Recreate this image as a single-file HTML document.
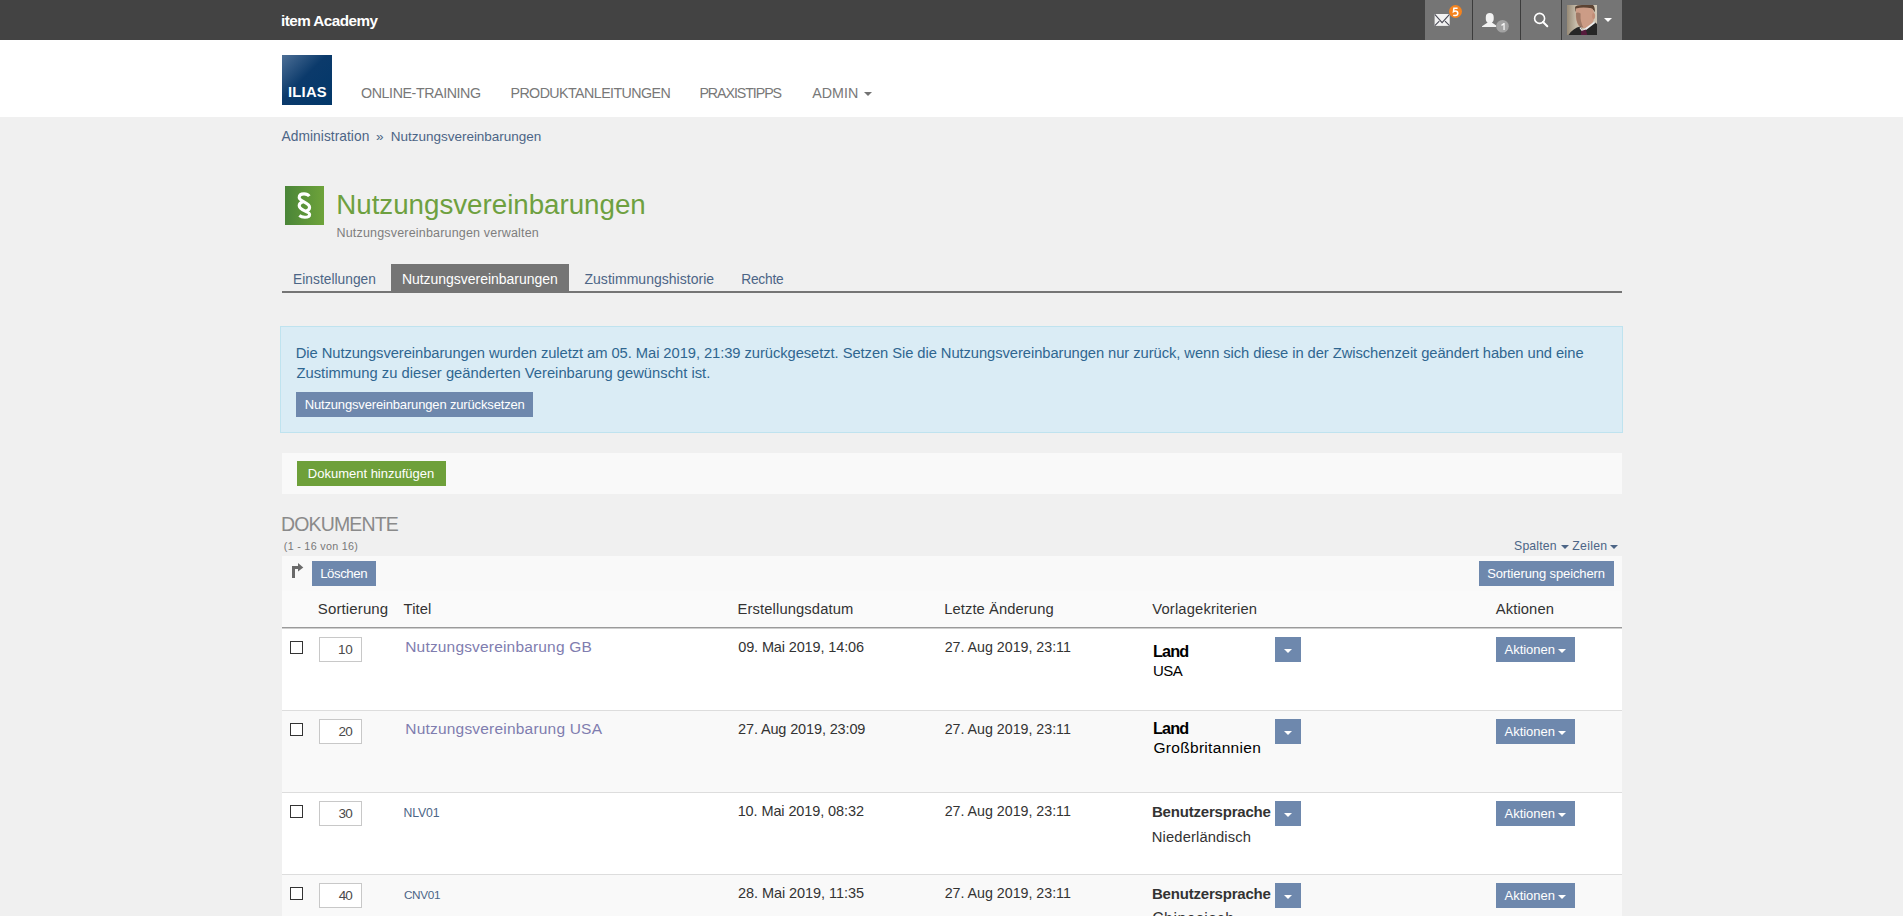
<!DOCTYPE html>
<html><head><meta charset="utf-8"><title>Nutzungsvereinbarungen</title>
<style>
html,body{margin:0;padding:0;}
body{width:1903px;height:916px;overflow:hidden;background:#f0f0f0;position:relative;font-family:"Liberation Sans",sans-serif;}
.b{position:absolute;}
.t{position:absolute;white-space:nowrap;font-family:"Liberation Sans",sans-serif;}
.btn{position:absolute;background:#6e88ad;}
.cb{position:absolute;width:11px;height:11px;border:1px solid #333;background:#fff;}
.inp{position:absolute;width:41px;height:23px;border:1px solid #c8c8c8;background:#fff;}
.caret{position:absolute;width:0;height:0;border-left:4px solid transparent;border-right:4px solid transparent;border-top:4px solid #fff;}
</style></head><body>
<!-- top bar -->
<div class="b" style="left:0;top:0;width:1903px;height:40px;background:#434343"></div>
<div class="b" style="left:1425px;top:0;width:197px;height:40px;background:#757575"></div>
<div class="b" style="left:1472px;top:0;width:1px;height:40px;background:#3c3c3c"></div>
<div class="b" style="left:1520px;top:0;width:1px;height:40px;background:#3c3c3c"></div>
<div class="b" style="left:1561px;top:0;width:1px;height:40px;background:#3c3c3c"></div>
<!-- mail icon -->
<svg class="b" style="left:1430px;top:2px" width="36" height="30" viewBox="0 0 36 30">
<rect x="4.6" y="12" width="15.1" height="11.9" fill="#f2f2f2"/>
<path d="M4.8 12.3 L12.1 20.6 L19.5 12.3" stroke="#4a4a55" stroke-width="1.1" fill="none"/>
<path d="M4.8 23.6 L9.3 19.2 M19.5 23.6 L15 19.2" stroke="#4a4a55" stroke-width="1.1" fill="none"/>
<circle cx="25.5" cy="9.5" r="6.5" fill="#f4831f"/>
<path d="M27.6 6.3 L23.9 6.3 L23.5 9.6 Q24.3 9 25.3 9 Q27.8 9 27.8 11.3 Q27.8 13.6 25.2 13.6 Q24 13.6 23.3 13.1" stroke="#fff" stroke-width="1.5" fill="none"/>
</svg>
<!-- person icon -->
<svg class="b" style="left:1476px;top:6px" width="36" height="30" viewBox="0 0 36 30">
<path d="M13.75 6.9 C16.2 6.9 17.7 8.3 17.7 11 L17.7 13.2 C17.7 14.8 16.8 15.8 16 16.3 L16.2 16.8 L20.2 19.5 L20.2 21 L6 21 L6 20.3 L11.3 16.8 L11.5 16.3 C10.7 15.8 9.8 14.8 9.8 13.2 L9.8 11 C9.8 8.3 11.3 6.9 13.75 6.9 Z" fill="#f2f2f2"/>
<circle cx="26.5" cy="20.3" r="6.3" fill="#a2a2a2"/>
<path d="M25.2 18.7 L27.6 17 L28.7 17 L28.7 24 L27.4 24 L27.4 19 L25.7 19.9 Z" fill="#f4f4f4"/>
</svg>
<!-- search -->
<svg class="b" style="left:1532px;top:11px" width="18" height="18" viewBox="0 0 18 18">
<circle cx="7.6" cy="7.4" r="5" stroke="#ffffff" stroke-width="1.6" fill="none"/>
<path d="M11 11 L15.3 15.3" stroke="#ffffff" stroke-width="2" stroke-linecap="round"/>
</svg>
<!-- avatar -->
<svg class="b" style="left:1567px;top:5px" width="30" height="30" viewBox="0 0 30 30">
<defs><linearGradient id="bgav" x1="0" y1="0" x2="1" y2="0"><stop offset="0" stop-color="#978a76"/><stop offset="0.3" stop-color="#c6bcaa"/><stop offset="1" stop-color="#d2c9b8"/></linearGradient></defs>
<rect width="30" height="30" fill="url(#bgav)"/>
<path d="M8 2 Q9 0 15 0 L26 0 Q28.3 2 27.8 7.5 Q26.5 3.5 22 3 Q14 2.5 10.5 4.2 Q8.8 5 8.6 7 Z" fill="#5b4333"/>
<path d="M9 3.5 Q17 1.5 25.5 3.8 L27.3 8 L27 14 Q25.5 20.5 20 22.8 Q14 24 11.5 20.5 Q8.5 16 8.8 9 Z" fill="#cc9c86"/>
<path d="M9 8 Q8.8 16 11.8 20.5 Q13.8 22.6 16.5 22.8 Q13 17 13.6 8.5 Q11 7 9 8 Z" fill="#94705e" opacity="0.8"/>
<ellipse cx="26.6" cy="11" rx="1.5" ry="3" fill="#c28e78"/>
<path d="M1.5 30 Q6 23 13.5 21.5 L15.5 26 L27.5 17 L30 19 L30 30 Z" fill="#262626"/>
<path d="M13.2 22 L15.5 25.3 L27.3 16.4 L28.2 18 L15.8 27.6 L12.5 23 Z" fill="#eeeeee"/>
<path d="M14.2 26 L18.8 24.5 L20.3 30 L14 30 Z" fill="#561a3c"/>
</svg>
<div class="caret" style="left:1604px;top:18px;border-left-width:4px;border-right-width:4px;border-top-width:4px"></div>

<!-- white header -->
<div class="b" style="left:0;top:40px;width:1903px;height:77px;background:#ffffff"></div>
<div class="b" style="left:282px;top:55px;width:50px;height:50px;background:linear-gradient(135deg,#4d6f96 0%,#0b3a6b 45%,#023769 100%)"></div>
<div class="caret" style="left:864px;top:92px;border-top-color:#737373;border-top-width:4px;border-left-width:4px;border-right-width:4px"></div>

<!-- title icon -->
<div class="b" style="left:285px;top:186px;width:39px;height:39px;background:linear-gradient(90deg,#4a8538 0%,#6ea33a 100%)"></div>
<svg class="b" style="left:285px;top:186px" width="39" height="39" viewBox="0 0 39 39">
<path d="M24.3 10.2 C23 8.4 21 7.9 19 7.9 C15.8 7.9 14.2 9.6 14.2 11.6 C14.2 15.6 24.6 16.3 24.6 21.3 C24.6 23.4 23 24.6 20.6 25.2" stroke="#fff" stroke-width="3.1" fill="none"/>
<path d="M18.2 15.8 C15.8 16.3 14.2 17.6 14.2 19.8 C14.2 24.6 24.6 25.3 24.6 28.4 C24.6 30.4 22.8 31.2 19.8 31.2 C17.6 31.2 15.6 30.6 14.3 29.6" stroke="#fff" stroke-width="3.1" fill="none"/>
</svg>

<!-- tabs -->
<div class="b" style="left:391px;top:264px;width:178px;height:28px;background:#757575"></div>
<div class="b" style="left:282px;top:291px;width:1340px;height:2px;background:#757575"></div>

<!-- info box -->
<div class="b" style="left:280px;top:326px;width:1341px;height:105px;background:#daecf5;border:1px solid #bfe3ef"></div>
<div class="btn" style="left:296px;top:392px;width:237px;height:25px"></div>

<!-- toolbar -->
<div class="b" style="left:282px;top:453px;width:1340px;height:41px;background:#f9f9f9"></div>
<div class="b" style="left:297px;top:461px;width:149px;height:25px;background:#6ea03a"></div>

<div class="caret" style="left:1560.5px;top:545px;border-top-color:#4c6586;border-left-width:4px;border-right-width:4px;border-top-width:4px"></div>
<div class="caret" style="left:1610px;top:545px;border-top-color:#4c6586;border-left-width:4px;border-right-width:4px;border-top-width:4px"></div>

<!-- table -->
<div class="b" style="left:282px;top:556px;width:1340px;height:35px;background:#f9f9f9"></div>
<div class="b" style="left:282px;top:591px;width:1340px;height:36px;background:#fafafa"></div>
<div class="b" style="left:282px;top:627px;width:1340px;height:1px;background:#9a9a9a"></div>
<div class="b" style="left:282px;top:628px;width:1340px;height:1px;background:#cfcfcf"></div>
<svg class="b" style="left:284px;top:558px" width="28" height="28" viewBox="0 0 28 28">
<rect x="8" y="8" width="3" height="12" fill="#6a6a6a"/>
<rect x="8" y="8" width="7" height="3" fill="#6a6a6a"/>
<path d="M14 5 L19.3 9.5 L14 13.5 Z" fill="#6a6a6a"/>
</svg>
<div class="btn" style="left:312px;top:561px;width:64px;height:25px"></div>
<div class="btn" style="left:1479px;top:561px;width:135px;height:25px"></div>

<div class="b" style="left:282px;top:629px;width:1340px;height:81px;background:#ffffff"></div>
<div class="b" style="left:282px;top:710px;width:1340px;height:1px;background:#dddddd"></div>
<div class="b" style="left:282px;top:711px;width:1340px;height:81px;background:#f9f9f9"></div>
<div class="b" style="left:282px;top:792px;width:1340px;height:1px;background:#dddddd"></div>
<div class="b" style="left:282px;top:793px;width:1340px;height:81px;background:#ffffff"></div>
<div class="b" style="left:282px;top:874px;width:1340px;height:1px;background:#dddddd"></div>
<div class="b" style="left:282px;top:875px;width:1340px;height:41px;background:#f9f9f9"></div>
<div class='cb' style='left:290px;top:641px'></div>
<div class='inp' style='left:319px;top:637px'></div>
<div class='btn' style='left:1275px;top:637px;width:26px;height:25px'></div>
<div class='caret' style='left:1284px;top:649px'></div>
<div class='btn' style='left:1496px;top:637px;width:79px;height:25px'></div>
<div class='caret' style='left:1558px;top:649px'></div>
<div class='cb' style='left:290px;top:723px'></div>
<div class='inp' style='left:319px;top:719px'></div>
<div class='btn' style='left:1275px;top:719px;width:26px;height:25px'></div>
<div class='caret' style='left:1284px;top:731px'></div>
<div class='btn' style='left:1496px;top:719px;width:79px;height:25px'></div>
<div class='caret' style='left:1558px;top:731px'></div>
<div class='cb' style='left:290px;top:805px'></div>
<div class='inp' style='left:319px;top:801px'></div>
<div class='btn' style='left:1275px;top:801px;width:26px;height:25px'></div>
<div class='caret' style='left:1284px;top:813px'></div>
<div class='btn' style='left:1496px;top:801px;width:79px;height:25px'></div>
<div class='caret' style='left:1558px;top:813px'></div>
<div class='cb' style='left:290px;top:887px'></div>
<div class='inp' style='left:319px;top:883px'></div>
<div class='btn' style='left:1275px;top:883px;width:26px;height:25px'></div>
<div class='caret' style='left:1284px;top:895px'></div>
<div class='btn' style='left:1496px;top:883px;width:79px;height:25px'></div>
<div class='caret' style='left:1558px;top:895px'></div>
<div class='t' style='left:280.93px;top:13px;font-size:15.25px;line-height:15.25px;font-weight:700;color:#ffffff;letter-spacing:-0.52px'>item Academy</div>
<div class='t' style='left:287.97px;top:85px;font-size:14.75px;line-height:14.75px;font-weight:700;color:#ffffff;letter-spacing:0.252px'>ILIAS</div>
<div class='t' style='left:361.09px;top:86px;font-size:14.25px;line-height:14.25px;font-weight:400;color:#787878;letter-spacing:-0.423px'>ONLINE-TRAINING</div>
<div class='t' style='left:510.46px;top:86px;font-size:14.25px;line-height:14.25px;font-weight:400;color:#787878;letter-spacing:-0.566px'>PRODUKTANLEITUNGEN</div>
<div class='t' style='left:699.46px;top:86px;font-size:14.25px;line-height:14.25px;font-weight:400;color:#787878;letter-spacing:-1.083px'>PRAXISTIPPS</div>
<div class='t' style='left:812.30px;top:86px;font-size:14.25px;line-height:14.25px;font-weight:400;color:#787878;letter-spacing:-0.011px'>ADMIN</div>
<div class='t' style='left:281.60px;top:130px;font-size:13.75px;line-height:13.75px;font-weight:400;color:#4c6586;letter-spacing:0.045px'>Administration</div>
<div class='t' style='left:375.96px;top:130px;font-size:13.5px;line-height:13.5px;font-weight:400;color:#4c6586;letter-spacing:0.02px'>»</div>
<div class='t' style='left:390.82px;top:130px;font-size:13.5px;line-height:13.5px;font-weight:400;color:#4c6586;letter-spacing:-0.019px'>Nutzungsvereinbarungen</div>
<div class='t' style='left:336.28px;top:191px;font-size:27.75px;line-height:27.75px;font-weight:400;color:#6ea040;letter-spacing:-0.028px'>Nutzungsvereinbarungen</div>
<div class='t' style='left:336.50px;top:227px;font-size:12.5px;line-height:12.5px;font-weight:400;color:#7e7e7e;letter-spacing:0.181px'>Nutzungsvereinbarungen verwalten</div>
<div class='t' style='left:293.10px;top:273px;font-size:13.75px;line-height:13.75px;font-weight:400;color:#4c6586;letter-spacing:0.019px'>Einstellungen</div>
<div class='t' style='left:401.88px;top:272px;font-size:14.0px;line-height:14.0px;font-weight:400;color:#ffffff;letter-spacing:-0.025px'>Nutzungsvereinbarungen</div>
<div class='t' style='left:584.48px;top:272px;font-size:14.0px;line-height:14.0px;font-weight:400;color:#4c6586;letter-spacing:0.028px'>Zustimmungshistorie</div>
<div class='t' style='left:741.20px;top:273px;font-size:13.75px;line-height:13.75px;font-weight:400;color:#4c6586;letter-spacing:-0.22px'>Rechte</div>
<div class='t' style='left:295.72px;top:346px;font-size:14.75px;line-height:14.75px;font-weight:400;color:#2f6690;letter-spacing:-0.071px'>Die Nutzungsvereinbarungen wurden zuletzt am 05. Mai 2019, 21:39 zurückgesetzt. Setzen Sie die Nutzungsvereinbarungen nur zurück, wenn sich diese in der Zwischenzeit geändert haben und eine</div>
<div class='t' style='left:296.46px;top:366px;font-size:14.75px;line-height:14.75px;font-weight:400;color:#2f6690;letter-spacing:0.011px'>Zustimmung zu dieser geänderten Vereinbarung gewünscht ist.</div>
<div class='t' style='left:304.66px;top:398px;font-size:13.0px;line-height:13.0px;font-weight:400;color:#ffffff;letter-spacing:-0.156px'>Nutzungsvereinbarungen zurücksetzen</div>
<div class='t' style='left:307.86px;top:467px;font-size:13.0px;line-height:13.0px;font-weight:400;color:#ffffff;letter-spacing:-0.008px'>Dokument hinzufügen</div>
<div class='t' style='left:280.94px;top:515px;font-size:19.5px;line-height:19.5px;font-weight:400;color:#8a8a8a;letter-spacing:-0.846px'>DOKUMENTE</div>
<div class='t' style='left:283.75px;top:541px;font-size:10.75px;line-height:10.75px;font-weight:400;color:#787878;letter-spacing:0.301px'>(1 - 16 von 16)</div>
<div class='t' style='left:1514.09px;top:540px;font-size:12.25px;line-height:12.25px;font-weight:400;color:#4c6586;letter-spacing:0.137px'>Spalten</div>
<div class='t' style='left:1572.33px;top:540px;font-size:12.25px;line-height:12.25px;font-weight:400;color:#4c6586;letter-spacing:0.277px'>Zeilen</div>
<div class='t' style='left:320.14px;top:567px;font-size:13.25px;line-height:13.25px;font-weight:400;color:#ffffff;letter-spacing:-0.438px'>Löschen</div>
<div class='t' style='left:1487.15px;top:567px;font-size:13.0px;line-height:13.0px;font-weight:400;color:#ffffff;letter-spacing:-0.107px'>Sortierung speichern</div>
<div class='t' style='left:317.85px;top:601px;font-size:15.0px;line-height:15.0px;font-weight:400;color:#333333;letter-spacing:0.122px'>Sortierung</div>
<div class='t' style='left:403.60px;top:602px;font-size:14.75px;line-height:14.75px;font-weight:400;color:#333333;letter-spacing:0.073px'>Titel</div>
<div class='t' style='left:737.62px;top:602px;font-size:14.75px;line-height:14.75px;font-weight:400;color:#333333;letter-spacing:0.113px'>Erstellungsdatum</div>
<div class='t' style='left:944.22px;top:602px;font-size:14.75px;line-height:14.75px;font-weight:400;color:#333333;letter-spacing:0.082px'>Letzte Änderung</div>
<div class='t' style='left:1152.35px;top:602px;font-size:14.75px;line-height:14.75px;font-weight:400;color:#333333;letter-spacing:0.145px'>Vorlagekriterien</div>
<div class='t' style='left:1495.80px;top:602px;font-size:14.75px;line-height:14.75px;font-weight:400;color:#333333;letter-spacing:0.101px'>Aktionen</div>
<div class='t' style='left:338.02px;top:643px;font-size:13.5px;line-height:13.5px;font-weight:400;color:#4a4a4a;letter-spacing:-0.265px'>10</div>
<div class='t' style='left:405.26px;top:639px;font-size:15.5px;line-height:15.5px;font-weight:400;color:#7f7daf;letter-spacing:0.174px'>Nutzungsvereinbarung GB</div>
<div class='t' style='left:738.22px;top:640px;font-size:14.5px;line-height:14.5px;font-weight:400;color:#333333;letter-spacing:-0.132px'>09. Mai 2019, 14:06</div>
<div class='t' style='left:944.69px;top:640px;font-size:14.25px;line-height:14.25px;font-weight:400;color:#333333;letter-spacing:-0.017px'>27. Aug 2019, 23:11</div>
<div class='t' style='left:1153.06px;top:643px;font-size:16.25px;line-height:16.25px;font-weight:700;color:#000000;letter-spacing:-0.854px'>Land</div>
<div class='t' style='left:1153.00px;top:663px;font-size:15.0px;line-height:15.0px;font-weight:400;color:#000000;letter-spacing:-0.575px'>USA</div>
<div class='t' style='left:1504.60px;top:643px;font-size:13.0px;line-height:13.0px;font-weight:400;color:#ffffff;letter-spacing:-0.041px'>Aktionen</div>
<div class='t' style='left:338.43px;top:725px;font-size:13.5px;line-height:13.5px;font-weight:400;color:#4a4a4a;letter-spacing:-0.67px'>20</div>
<div class='t' style='left:405.26px;top:721px;font-size:15.5px;line-height:15.5px;font-weight:400;color:#7f7daf;letter-spacing:0.2px'>Nutzungsvereinbarung USA</div>
<div class='t' style='left:738.07px;top:722px;font-size:14.5px;line-height:14.5px;font-weight:400;color:#333333;letter-spacing:-0.137px'>27. Aug 2019, 23:09</div>
<div class='t' style='left:944.69px;top:722px;font-size:14.25px;line-height:14.25px;font-weight:400;color:#333333;letter-spacing:-0.017px'>27. Aug 2019, 23:11</div>
<div class='t' style='left:1153.06px;top:720px;font-size:16.25px;line-height:16.25px;font-weight:700;color:#000000;letter-spacing:-0.854px'>Land</div>
<div class='t' style='left:1153.42px;top:740px;font-size:15.5px;line-height:15.5px;font-weight:400;color:#000000;letter-spacing:0.309px'>Großbritannien</div>
<div class='t' style='left:1504.60px;top:725px;font-size:13.0px;line-height:13.0px;font-weight:400;color:#ffffff;letter-spacing:-0.041px'>Aktionen</div>
<div class='t' style='left:338.56px;top:807px;font-size:13.5px;line-height:13.5px;font-weight:400;color:#4a4a4a;letter-spacing:-0.805px'>30</div>
<div class='t' style='left:403.52px;top:807px;font-size:12.25px;line-height:12.25px;font-weight:400;color:#4c6586;letter-spacing:-0.128px'>NLV01</div>
<div class='t' style='left:737.64px;top:804px;font-size:14.5px;line-height:14.5px;font-weight:400;color:#333333;letter-spacing:-0.1px'>10. Mai 2019, 08:32</div>
<div class='t' style='left:944.69px;top:804px;font-size:14.25px;line-height:14.25px;font-weight:400;color:#333333;letter-spacing:-0.017px'>27. Aug 2019, 23:11</div>
<div class='t' style='left:1151.95px;top:804px;font-size:15.0px;line-height:15.0px;font-weight:700;color:#333333;letter-spacing:-0.196px'>Benutzersprache</div>
<div class='t' style='left:1151.82px;top:830px;font-size:14.75px;line-height:14.75px;font-weight:400;color:#333333;letter-spacing:0.121px'>Niederländisch</div>
<div class='t' style='left:1504.60px;top:807px;font-size:13.0px;line-height:13.0px;font-weight:400;color:#ffffff;letter-spacing:-0.041px'>Aktionen</div>
<div class='t' style='left:338.83px;top:889px;font-size:13.5px;line-height:13.5px;font-weight:400;color:#4a4a4a;letter-spacing:-1.075px'>40</div>
<div class='t' style='left:403.91px;top:889px;font-size:11.75px;line-height:11.75px;font-weight:400;color:#4c6586;letter-spacing:-0.29px'>CNV01</div>
<div class='t' style='left:738.07px;top:886px;font-size:14.5px;line-height:14.5px;font-weight:400;color:#333333;letter-spacing:-0.068px'>28. Mai 2019, 11:35</div>
<div class='t' style='left:944.69px;top:886px;font-size:14.25px;line-height:14.25px;font-weight:400;color:#333333;letter-spacing:-0.017px'>27. Aug 2019, 23:11</div>
<div class='t' style='left:1151.95px;top:886px;font-size:15.0px;line-height:15.0px;font-weight:700;color:#333333;letter-spacing:-0.196px'>Benutzersprache</div>
<div class='t' style='left:1152.21px;top:911px;font-size:15.75px;line-height:15.75px;font-weight:400;color:#333333;letter-spacing:0.524px'>Chinesisch</div>
<div class='t' style='left:1504.60px;top:889px;font-size:13.0px;line-height:13.0px;font-weight:400;color:#ffffff;letter-spacing:-0.041px'>Aktionen</div>
</body></html>
